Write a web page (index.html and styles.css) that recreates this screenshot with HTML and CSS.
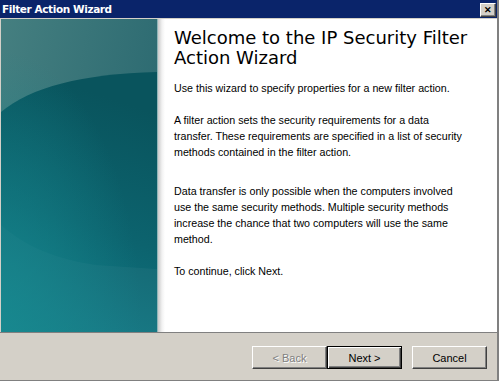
FILE: index.html
```html
<!DOCTYPE html>
<html lang="en">
<head>
    <meta charset="UTF-8">
    <title>Filter Action Wizard</title>
    <link rel="stylesheet" href="styles.css">
</head>
<body>
    <div class="window">
        <div class="titlebar">
            <span class="title">Filter Action Wizard</span>
            <button class="close" type="button">&#x2715;</button>
        </div>

        <div class="main">
            <div class="banner">
                <svg viewBox="0 0 156 313" preserveAspectRatio="none" width="156" height="313">
                    <defs>
                        <linearGradient id="sky" x1="0" y1="0" x2="1" y2="0.4">
                            <stop offset="0" stop-color="#457f80"/>
                            <stop offset="1" stop-color="#2c6a71"/>
                        </linearGradient>
                        <linearGradient id="sea" x1="0.2" y1="0" x2="0" y2="1">
                            <stop offset="0" stop-color="#09545d"/>
                            <stop offset="0.5" stop-color="#0c636e"/>
                            <stop offset="1" stop-color="#107a86"/>
                        </linearGradient>
                        <radialGradient id="glow" cx="0" cy="1" r="0.9">
                            <stop offset="0" stop-color="#178a90" stop-opacity="0.8"/>
                            <stop offset="1" stop-color="#178a90" stop-opacity="0"/>
                        </radialGradient>
                    </defs>
                    <rect width="156" height="313" fill="url(#sky)"/>
                    <path d="M0 93 C30 68 80 55 156 53 L156 313 L0 313 Z" fill="url(#sea)"/>
                    <path d="M0 206 C25 228 55 240 95 246 L156 250 L156 313 L0 313 Z" fill="#ffffff" opacity="0.04"/>
                    <rect width="156" height="313" fill="url(#glow)"/>
                </svg>
            </div>

            <div class="content">
                <h1>Welcome to the IP Security Filter Action Wizard</h1>
                <p>Use this wizard to specify properties for a new filter action.</p>
                <p class="gap">A filter action sets the security requirements for a data transfer. These requirements are specified in a list of security methods contained in the filter action.</p>
                <p class="gap wide">Data transfer is only possible when the computers involved use the same security methods. Multiple security methods increase the chance that two computers will use the same method.</p>
                <p class="gap">To continue, click Next.</p>
            </div>
        </div>

        <div class="footer">
            <button class="btn" type="button" disabled>&lt; Back</button>
            <button class="btn default" type="button">Next &gt;</button>
            <button class="btn cancel" type="button">Cancel</button>
        </div>
    </div>
</body>
</html>
```

FILE: styles.css
```css
body {
    margin: 0;
    width: 499px;
    height: 381px;
    background: #d4d0c8;
    font-family: "Liberation Sans", Arial, sans-serif;
    font-size: 10.7px;
    color: #000;
}
.window {
    width: 497px;
    height: 380px;
    border-right: 2px solid #808080;
    border-bottom: 1px solid #808080;
    display: flex;
    flex-direction: column;
}
.titlebar {
    height: 18px;
    background: #0a246a;
    border-bottom: 1px solid #d4d0c8;
    display: flex;
    align-items: center;
    justify-content: space-between;
    padding: 0 1px 0 2px;
}
.title {
    color: white;
    font-family: "DejaVu Sans", Verdana, sans-serif;
    font-weight: bold;
    font-size: 10.5px;
    letter-spacing: -0.4px;
}
.close {
    width: 16px;
    height: 14px;
    padding: 0;
    margin-top: 1px;
    background: #d4d0c8;
    border: 1px solid;
    border-color: #fff #404040 #404040 #fff;
    box-shadow: inset -1px -1px #808080;
    font-size: 9px;
    font-weight: bold;
    line-height: 12px;
    color: #000;
}
.main {
    display: flex;
    height: 313px;
    border-left: 1px solid #d4d0c8;
}
.banner {
    width: 156px;
    border-right: 1px solid #8fb5b8;
}
.banner svg {
    display: block;
}
.content {
    flex: 1;
    background: linear-gradient(to right, #c9c9c9, #f2f2f2 4px, #fff 7px);
    padding: 9px 31px 0 16px;
}
h1 {
    font-family: "DejaVu Sans", Verdana, sans-serif;
    font-weight: normal;
    font-size: 18px;
    line-height: 20px;
    margin: 0 -30px 12px 0;
}
p {
    margin: 0;
    line-height: 16px;
}
.gap {
    margin-top: 16px;
}
.gap.wide {
    margin-top: 23px;
}
.footer {
    flex: 1;
    border-top: 1px solid #808080;
    display: flex;
    align-items: flex-start;
    padding: 13px 10px 0 0;
    justify-content: flex-end;
}
.btn {
    width: 75px;
    height: 23px;
    background: #d4d0c8;
    border: 1px solid;
    border-color: #fff #404040 #404040 #fff;
    box-shadow: inset -1px -1px #808080;
    font-family: "Liberation Sans", Arial, sans-serif;
    font-size: 11px;
    color: #000;
    padding: 0;
}
.btn:disabled {
    color: #808080;
    text-shadow: 1px 1px #fff;
}
.btn.default {
    border: 1px solid #000;
    box-shadow: inset 1px 1px #fff, inset -1px -1px #404040, inset -2px -2px #808080;
}
.cancel {
    margin-left: 10px;
}
```
